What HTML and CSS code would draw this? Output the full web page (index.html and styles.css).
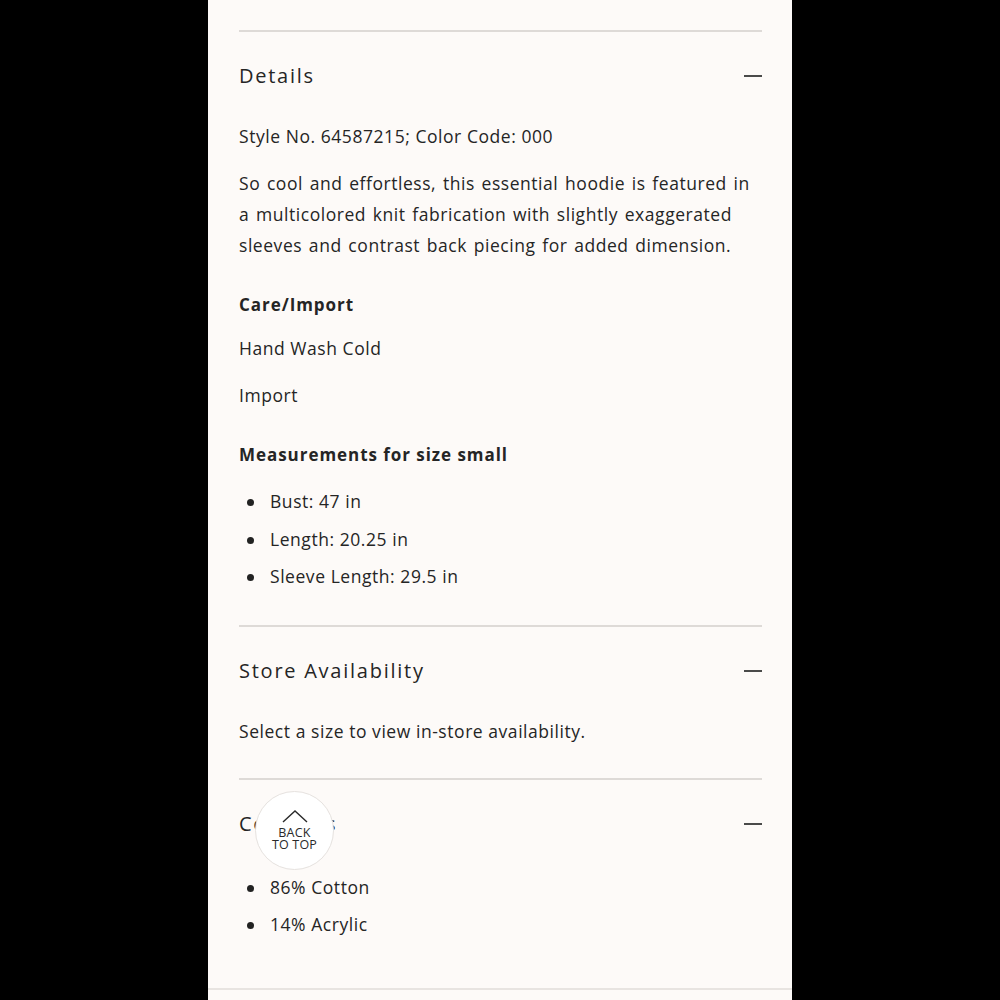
FILE: index.html
```html
<!DOCTYPE html>
<html lang="en">
<head>
    <meta charset="UTF-8">
    <meta name="viewport" content="width=device-width, initial-scale=1.0">
    <title>Product details</title>
    <link rel="stylesheet" href="styles.css">
</head>
<body>

    <div class="panel">

        <!-- Details -->
        <section class="acc">
            <div class="acc-head">
                <h2>Details</h2>
                <span class="minus"></span>
            </div>
            <div class="acc-body">
                <p>Style No. 64587215; Color Code: 000</p>
                <p class="desc">So cool and effortless, this essential hoodie is featured in a multicolored knit fabrication with slightly exaggerated sleeves and contrast back piecing for added dimension.</p>
                <h3>Care/Import</h3>
                <p>Hand Wash Cold</p>
                <p>Import</p>
                <h3>Measurements for size small</h3>
                <ul class="dots">
                    <li>Bust: 47 in</li>
                    <li>Length: 20.25 in</li>
                    <li>Sleeve Length: 29.5 in</li>
                </ul>
            </div>
        </section>

        <!-- Store Availability -->
        <section class="acc">
            <div class="acc-head">
                <h2>Store Availability</h2>
                <span class="minus"></span>
            </div>
            <div class="acc-body">
                <p>Select a size to view in-store availability.</p>
            </div>
        </section>

        <!-- Contents -->
        <section class="acc last">
            <div class="acc-head">
                <h2>Contents</h2>
                <span class="minus"></span>
            </div>
            <div class="acc-body">
                <ul class="dots">
                    <li>86% Cotton</li>
                    <li>14% Acrylic</li>
                </ul>
            </div>
        </section>

        <!-- Кнопка наверх -->
        <a class="to-top" href="#">
            <svg width="26" height="13" viewBox="0 0 26 13">
                <polyline points="1,12 13,1 25,12" fill="none" stroke="#2a2a2a" stroke-width="1.4"/>
            </svg>
            <span>BACK<br>TO TOP</span>
        </a>
    </div>

</body>
</html>
```

FILE: styles.css
```css
/* Основа */
body {
    margin: 0;
    background: #000;
    font-family: "Open Sans", "Liberation Sans", sans-serif;
    color: #252525;
}
.panel {
    position: relative;
    width: 584px;
    height: 1000px;
    margin: 0 auto;
    padding: 30px 30px 0 31px;
    box-sizing: border-box;
    background: #fdfaf8;
}
.panel::after {
    content: "";
    position: absolute;
    left: 0;
    right: 0;
    top: 988px;
    border-top: 2px solid #e8e4e1;
}
/* Аккордеон */
.acc {
    border-top: 2px solid #dedad7;
}
.acc-head {
    display: flex;
    align-items: center;
    justify-content: space-between;
    padding: 31px 0 30px;
}
.acc-head h2 {
    margin: 0;
    font-size: 20px;
    line-height: 26px;
    font-weight: 400;
    letter-spacing: 1.75px;
}
.minus {
    width: 18px;
    height: 2px;
    background: #4a4a4a;
}
.acc-body {
    padding: 2px 0 15px;
    font-size: 17.5px;
    line-height: 31px;
    letter-spacing: 0.55px;
}
.acc-body p {
    margin: 0 0 16px;
}
.acc-body p.desc {
    word-spacing: 1.6px;
}
.acc-body h3 {
    margin: 28px 0 13px;
    font-size: 17px;
    line-height: 31px;
    font-weight: 700;
    letter-spacing: 0.95px;
}
.dots {
    list-style: none;
    margin: 12px 0 14px;
    padding: 0;
}
.dots li {
    position: relative;
    padding-left: 31px;
    line-height: 37.5px;
}
.dots li::before {
    content: "";
    position: absolute;
    left: 8px;
    top: 16px;
    width: 7px;
    height: 7px;
    border-radius: 50%;
    background: #222;
}
.acc.last .dots {
    margin: 0 0 44px;
}
/* Кнопка наверх */
.to-top {
    position: absolute;
    left: 47px;
    top: 791px;
    width: 77px;
    height: 77px;
    border: 1.5px solid #e6e2df;
    border-radius: 50%;
    background: #fff;
    display: flex;
    flex-direction: column;
    align-items: center;
    justify-content: center;
    text-decoration: none;
    color: #2a2a2a;
}
.to-top svg {
    margin-bottom: 4px;
}
.to-top span {
    font-size: 12.5px;
    line-height: 12.5px;
    text-align: center;
    letter-spacing: 0.2px;
}
```
